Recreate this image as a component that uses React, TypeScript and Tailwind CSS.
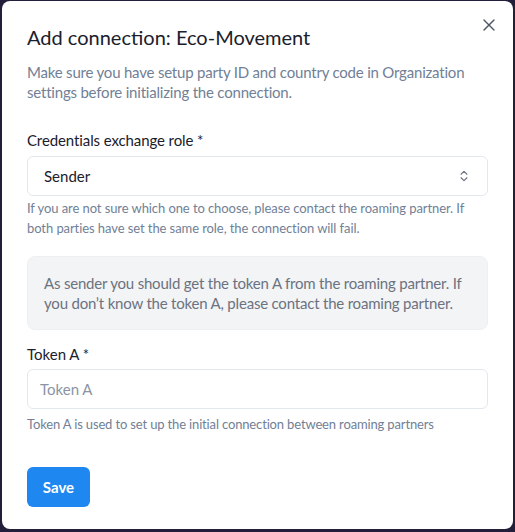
import { X, ChevronsUpDown } from "lucide-react";

const font = { fontFamily: "Lato, 'Noto Sans', sans-serif" };

const App = () => {
  return (
    <div className="w-[515px] h-[532px] bg-[#231f3a] p-[1px_2px_3px_2px]" style={font}>
      <div className="relative h-full bg-white rounded-lg px-[25px] pt-[22px]">
        <button className="absolute right-[14px] top-[14px] text-[#4b5563]">
          <X size={20} strokeWidth={1.6} />
        </button>
        <h2 className="text-[20px] leading-[28px] text-[#1a202c] font-normal">
          Add connection: Eco-Movement
        </h2>
        <p className="mt-[11px] text-[15px] leading-[20px] tracking-[-0.2px] text-[#718096]">
          Make sure you have setup party ID and country code in Organization settings before
          initializing the connection.
        </p>

        <div className="mt-[28px]">
          <label className="block text-[15px] leading-[20px] tracking-[-0.1px] text-[#1a202c]">
            Credentials exchange role *
          </label>
          <div className="mt-[6px] h-[40px] flex items-center justify-between border border-[#e2e8f0] rounded-md px-4">
            <span className="text-[15px] text-[#1a202c]">Sender</span>
            <ChevronsUpDown size={14} className="text-[#6b7280]" />
          </div>
          <p className="mt-[2px] text-[13px] leading-[20px] tracking-[-0.08px] text-[#718096]">
            If you are not sure which one to choose, please contact the roaming partner. If both
            parties have set the same role, the connection will fail.
          </p>
        </div>

        <div className="mt-[18px] bg-[#f3f4f6] border border-[#edf0f3] rounded-lg px-4 py-[16px]">
          <p className="text-[15px] leading-[20px] tracking-[-0.2px] text-[#6b7280]">
            As sender you should get the token A from the roaming partner. If you don’t know the
            token A, please contact the roaming partner.
          </p>
        </div>

        <div className="mt-[14px]">
          <label className="block text-[15px] leading-[20px] text-[#1a202c]">Token A *</label>
          <input
            placeholder="Token A"
            className="mt-[5px] w-full h-[40px] border border-[#e2e8f0] rounded-md px-3 text-[15px] placeholder:text-[#8a94a3] outline-none"
          />
          <p className="mt-[5px] text-[13px] leading-[20px] tracking-[-0.15px] text-[#718096]">
            Token A is used to set up the initial connection between roaming partners
          </p>
        </div>

        <button className="mt-[33px] h-[40px] w-[63px] bg-[#1e88f0] text-white text-[15px] font-bold rounded-md">
          Save
        </button>
      </div>
    </div>
  );
};

export default App;
